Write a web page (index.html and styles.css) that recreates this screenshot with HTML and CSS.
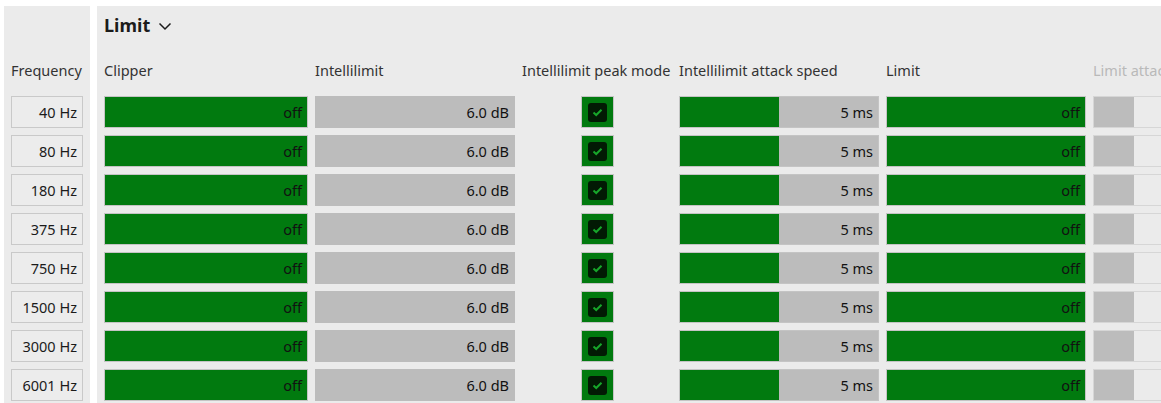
FILE: index.html
```html
<!DOCTYPE html>
<html lang="en">

<head>
    <meta charset="UTF-8">
    <title>Limit</title>
    <link rel="stylesheet" href="styles.css">
</head>

<body>
    <div class="freq-panel">
        <div class="col-label">Frequency</div>
        <div class="freq-list">
            <div class="freq">40 Hz</div>
            <div class="freq">80 Hz</div>
            <div class="freq">180 Hz</div>
            <div class="freq">375 Hz</div>
            <div class="freq">750 Hz</div>
            <div class="freq">1500 Hz</div>
            <div class="freq">3000 Hz</div>
            <div class="freq">6001 Hz</div>
        </div>
    </div>

    <div class="limit-panel">
        <div class="title">Limit
            <svg class="chevron" width="14" height="14" viewBox="0 0 14 14"><path d="M1.5 4.5 L7 10 L12.5 4.5" fill="none" stroke="#1b1b1b" stroke-width="1.5"/></svg>
        </div>
        <div class="grid" id="grid">
            <div class="col-label">Clipper</div>
            <div class="col-label">Intellilimit</div>
            <div class="col-label">Intellilimit peak mode</div>
            <div class="col-label">Intellilimit attack speed</div>
            <div class="col-label">Limit</div>
            <div class="col-label disabled">Limit attack speed</div>
        </div>
    </div>

    <script>
        const grid = document.getElementById('grid');
        const check = '<svg width="19" height="19" viewBox="0 0 19 19"><rect x="0" y="0" width="19" height="19" rx="3" fill="#021a04"/><path d="M5.5 9.5 L8.2 12 L13.5 6.8" fill="none" stroke="#17a62a" stroke-width="2"/></svg>';

        for (let i = 0; i < 8; i++) {
            grid.insertAdjacentHTML('beforeend',
                '<div class="bar on"><span>off</span></div>' +
                '<div class="bar grey"><span>6.0 dB</span></div>' +
                '<div class="check-cell"><div class="checkbox">' + check + '</div></div>' +
                '<div class="bar slider"><div class="fill" style="width: 50%"></div><span>5 ms</span></div>' +
                '<div class="bar on"><span>off</span></div>' +
                '<div class="bar slider faded"><div class="fill" style="width: 20%"></div></div>'
            );
        }
    </script>
</body>

</html>
```

FILE: styles.css
```css
body {
    margin: 0;
    padding: 6px 0 0 4px;
    background: #ffffff;
    font-family: "Noto Sans", "Open Sans", sans-serif;
    font-size: 14.5px;
    color: #1b1b1b;
    display: flex;
    gap: 7px;
    height: 397px;
    overflow: hidden;
}

.freq-panel {
    width: 86px;
    background: #ebebeb;
    padding: 38px 0 0 7px;
    box-sizing: border-box;
}

.col-label {
    height: 45px;
    box-sizing: border-box;
    padding-top: 7px;
    display: flex;
    align-items: center;
    color: #333;
    white-space: nowrap;
}

.freq-panel .col-label {
    margin-bottom: 7px;
}

.freq-list {
    display: flex;
    flex-direction: column;
    gap: 7px;
}

.freq {
    width: 72px;
    height: 32px;
    box-sizing: border-box;
    border: 1px solid #c9c9c9;
    background: #ececec;
    text-align: right;
    padding-right: 5px;
    line-height: 30px;
}

.limit-panel {
    flex: 1;
    background: #ebebeb;
    padding-left: 7px;
    overflow: hidden;
}

.title {
    height: 38px;
    display: flex;
    align-items: center;
    gap: 8px;
    font-size: 18px;
    font-weight: 700;
    color: #1b1b1b;
}

.chevron {
    margin-top: 1px;
}

.grid {
    display: grid;
    grid-template-columns: 204px 200px 150px 200px 200px 200px;
    grid-template-rows: 45px;
    grid-auto-rows: 32px;
    column-gap: 7px;
    row-gap: 7px;
}

.col-label.disabled {
    color: #b9b9b9;
}

.bar {
    position: relative;
    box-sizing: border-box;
    border: 1px solid #c4c4c4;
    background: #bcbcbc;
    display: flex;
    align-items: center;
    justify-content: flex-end;
    padding-right: 5px;
    color: #111;
}

.bar span {
    position: relative;
}

.bar.on {
    background: #017a0f;
}

.bar.grey {
    border-color: #bcbcbc;
}

.bar .fill {
    position: absolute;
    left: 0;
    top: 0;
    bottom: 0;
    background: #017a0f;
}

.bar.faded {
    background: #ebebeb;
    border-color: #d6d6d6;
}

.bar.faded .fill {
    background: #bcbcbc;
}

.check-cell {
    display: flex;
    justify-content: center;
}

.checkbox {
    width: 33px;
    height: 32px;
    box-sizing: border-box;
    border: 1px solid #c4c4c4;
    background: #017a0f;
    display: flex;
    align-items: center;
    justify-content: center;
}

.checkbox svg {
    display: block;
}
```
